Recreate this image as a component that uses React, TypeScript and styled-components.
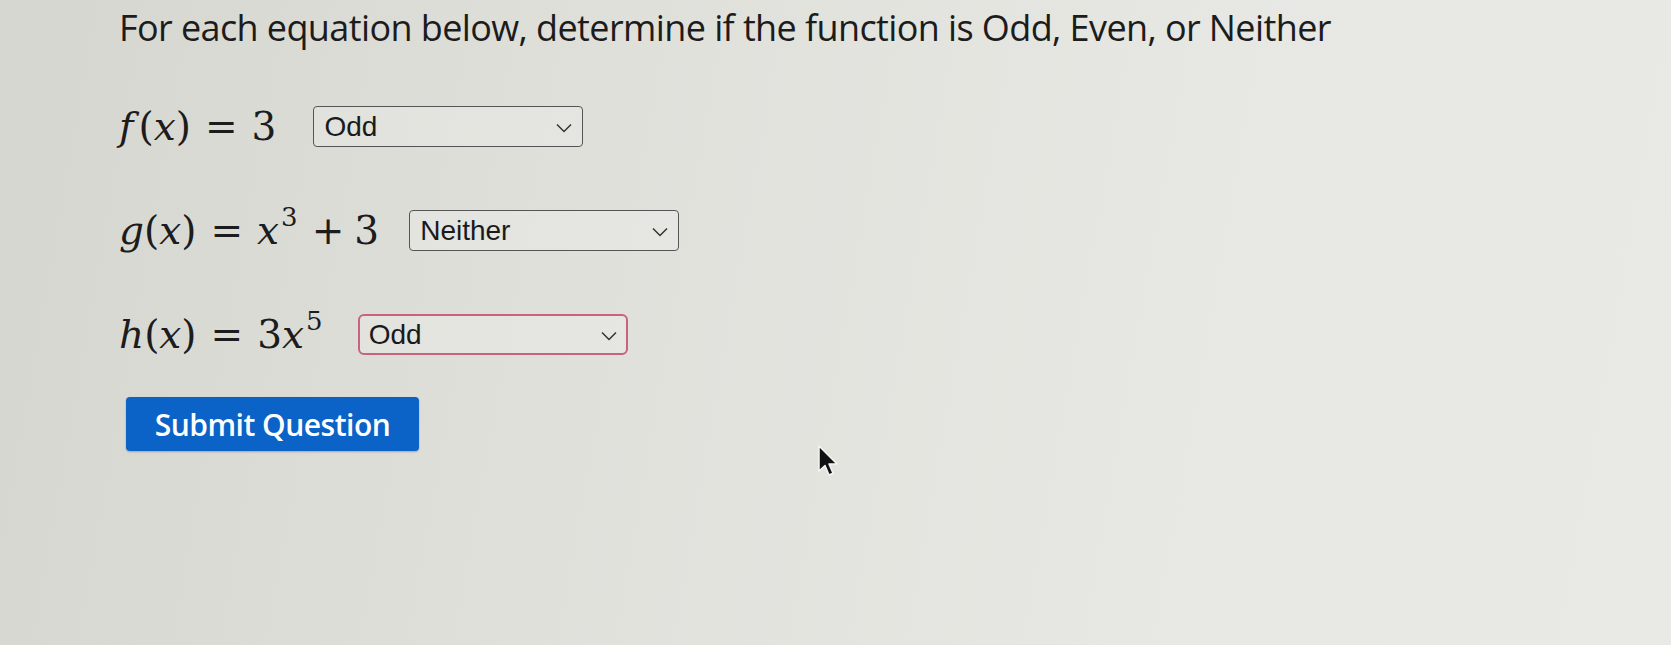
import React, { useState } from 'react';
import styled, { createGlobalStyle } from 'styled-components';

const GlobalStyle = createGlobalStyle`
  html, body {
    margin: 0;
    padding: 0;
  }
  body {
    width: 1671px;
    height: 645px;
    overflow: hidden;
    background: linear-gradient(100deg, #d6d6d0 0%, #e0e0db 35%, #e7e7e3 70%, #e9e9e6 100%);
  }
`;

const Page = styled.main`
  position: relative;
  height: 645px;
  padding: 4px 0 0 119px;
  box-sizing: border-box;
  color: #1c1c1c;
`;

const Title = styled.h1`
  margin: 0;
  font-family: 'Open Sans', 'Noto Sans', sans-serif;
  font-weight: 400;
  font-size: 36px;
  line-height: 48px;
  letter-spacing: -0.6px;
`;

const Rows = styled.div`
  display: flex;
  flex-direction: column;
  gap: 63px;
  margin-top: 54px;
`;

const Row = styled.div<{ $gap?: number }>`
  display: flex;
  align-items: center;
  gap: ${({ $gap }) => $gap ?? 34}px;
  height: 41px;
`;

const Math = styled.span`
  font-family: 'DejaVu Serif', 'Liberation Serif', serif;
  font-size: 39px;
  white-space: nowrap;
`;

const Var = styled.i<{ $after?: number }>`
  font-style: italic;
  margin-right: ${({ $after }) => $after ?? 0}px;
`;

const Op = styled.span<{ $tight?: boolean }>`
  margin: ${({ $tight }) => ($tight ? '0 10px 0 14px' : '0 14px')};
`;

const Sup = styled.sup`
  font-size: 26px;
  vertical-align: 0;
  position: relative;
  top: -18px;
  margin-left: 2px;
`;

const SelectWrap = styled.div`
  position: relative;
  width: 270px;
  height: 41px;
`;

const Select = styled.select<{ $invalid?: boolean }>`
  appearance: none;
  width: 100%;
  height: 100%;
  box-sizing: border-box;
  margin: 0;
  padding: 0 40px 0 ${({ $invalid }) => ($invalid ? '9px' : '10px')};
  font-family: 'Liberation Sans', Arial, sans-serif;
  font-size: 28px;
  color: #1a1a1a;
  background: rgba(255, 255, 255, 0.18);
  border: ${({ $invalid }) => ($invalid ? '2.5px solid #c9617f' : '1.5px solid #555')};
  border-radius: ${({ $invalid }) => ($invalid ? '6px' : '4px')};
  outline: none;
`;

const Chevron = styled.svg`
  position: absolute;
  right: 11px;
  top: 50%;
  transform: translateY(-40%);
  pointer-events: none;
`;

const SubmitButton = styled.button`
  margin: 42px 0 0 7px;
  width: 293px;
  height: 54px;
  border: none;
  border-radius: 4px;
  background: #0b63c8;
  color: #fff;
  font-family: 'Open Sans', 'Noto Sans', sans-serif;
  font-weight: 600;
  font-size: 30px;
  letter-spacing: -0.5px;
  box-shadow: 0 1px 2px rgba(0, 0, 0, 0.25);
  cursor: pointer;
`;

const Pointer = styled.svg`
  position: absolute;
  left: 817px;
  top: 445px;
`;

const options = ['', 'Odd', 'Even', 'Neither'];

interface ChoiceProps {
  initial: string;
  invalid?: boolean;
}

function Choice({ initial, invalid }: ChoiceProps) {
  const [value, setValue] = useState(initial);
  return (
    <SelectWrap>
      <Select $invalid={invalid} value={value} onChange={(e) => setValue(e.target.value)}>
        {options.map((o) => (
          <option key={o} value={o}>
            {o}
          </option>
        ))}
      </Select>
      <Chevron width="16" height="10" viewBox="0 0 16 10">
        <path d="M1 1.5 L8 8.5 L15 1.5" fill="none" stroke="#333" strokeWidth="1.5" />
      </Chevron>
    </SelectWrap>
  );
}

function App() {
  return (
    <>
      <GlobalStyle />
      <Page>
        <Title>For each equation below, determine if the function is Odd, Even, or Neither</Title>
        <Rows>
          <Row $gap={37}>
            <Math>
              <Var $after={5}>f</Var>(<Var>x</Var>)<Op>=</Op>3
            </Math>
            <Choice initial="Odd" />
          </Row>
          <Row $gap={30}>
            <Math>
              <Var>g</Var>(<Var>x</Var>)<Op>=</Op>
              <Var>x</Var>
              <Sup>3</Sup>
              <Op $tight>+</Op>3
            </Math>
            <Choice initial="Neither" />
          </Row>
          <Row $gap={35}>
            <Math>
              <Var>h</Var>(<Var>x</Var>)<Op>=</Op>3<Var>x</Var>
              <Sup>5</Sup>
            </Math>
            <Choice initial="Odd" invalid />
          </Row>
        </Rows>
        <SubmitButton type="button">Submit Question</SubmitButton>
        <Pointer width="22" height="34" viewBox="0 0 22 34">
          <path
            d="M2 1 L2 26 L8 20.5 L12 30 L16 28.3 L12 19 L20 19 Z"
            fill="#111"
            stroke="#f4f4f4"
            strokeWidth="1.5"
            strokeLinejoin="round"
          />
        </Pointer>
      </Page>
    </>
  );
}

export default App;
